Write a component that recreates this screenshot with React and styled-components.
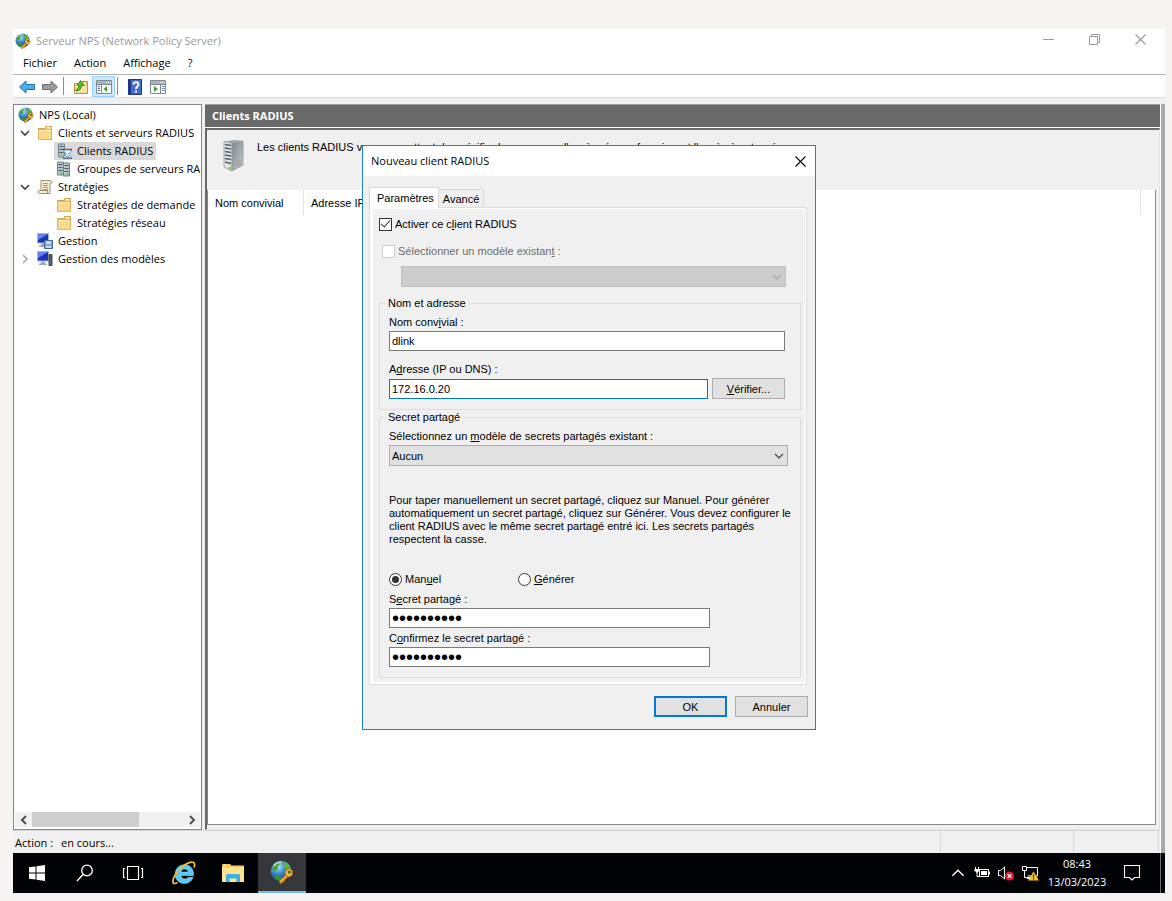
import React from "react";
import styled, { createGlobalStyle, css } from "styled-components";

//* <-- ICONS --> //
const GlobeKeyIcon = ({ size = 16 }) => (
  <svg width={size} height={size} viewBox="0 0 32 32" aria-hidden="true">
    <defs>
      <radialGradient id="globe" cx="0.35" cy="0.28" r="0.75">
        <stop offset="0" stopColor="#b9e4fb" />
        <stop offset="0.45" stopColor="#3a8ad6" />
        <stop offset="1" stopColor="#0b2f80" />
      </radialGradient>
    </defs>
    <circle cx="15" cy="15" r="14" fill="url(#globe)" />
    <path d="M3 12C4 6 8 3 12 3l1 3-3 3 1 3-4 3z" fill="#4ea32c" />
    <path d="M18 2c5 1 8 4 10 9l-3 3-5-2-2-4 2-3z" fill="#5db437" />
    <path d="M7 21l6 0 2 3-2 4C9 27 6 25 5 23z" fill="#2f9a25" />
    <path d="M5 8c3-4 7-5 10-5" stroke="#e4f6ff" strokeWidth="2" fill="none" opacity="0.7" />
    <path d="M22 19L12 28l1 3 3 0 1-2 2 0 1-3 5-4z" fill="#f2a72c" stroke="#9c5a08" strokeWidth="1" />
    <path d="M20 15l5-4 5 3 0 6-5 3-5-3z" fill="#f6b33b" stroke="#9c5a08" strokeWidth="1" />
    <circle cx="26" cy="16" r="2" fill="#2c6b2a" />
  </svg>
);

const FolderIcon = () => (
  <svg width="16" height="16" viewBox="0 0 16 16" aria-hidden="true">
    <path d="M1.500 3.500h7v-2h6v12.500h-13z" fill="#edc56c" stroke="#d3a54a" />
    <path d="M9.500 2h4v1.500h-4z" fill="#fff6d8" />
    <path d="M1.500 4.500h13v10h-13z" fill="#f9da8a" stroke="#dfb45a" />
    <path d="M2 5.500h12" stroke="#fdebb8" />
  </svg>
);

const ServerShape = ({ x }) => (
  <g>
    <path d={`M${x} 1h6v13h-6z`} fill="#b9c3ca" stroke="#75838c" />
    <path d={`M${x + 1} 3.500h4M${x + 1} 6.500h4M${x + 1} 9.500h4`} stroke="#4a5962" />
    <path d={`M${x + 3} 12.500h2`} stroke="#3fd04a" strokeWidth="2" />
  </g>
);

const ServerWaitIcon = () => (
  <svg width="16" height="16" viewBox="0 0 16 16" aria-hidden="true">
    <ServerShape x={2.5} />
    <path d="M7 6.500h9M7 15.500h9" stroke="#8a4a2c" strokeWidth="1.500" />
    <path d="M8 7h7v1.500l-2.500 2.500 2.500 2.500V15H8v-1.500l2.500-2.500L8 8.500z" fill="#f2f9ff" stroke="#5c8fc4" />
    <path d="M9 14.500l2.500-2 2.500 2z" fill="#3d83cf" />
  </svg>
);

const ServerGroupIcon = () => (
  <svg width="16" height="16" viewBox="0 0 16 16" aria-hidden="true">
    <ServerShape x={1.5} />
    <g transform="translate(0 1)">
      <ServerShape x={7.5} />
    </g>
  </svg>
);

const ScrollIcon = () => (
  <svg width="16" height="16" viewBox="0 0 16 16" aria-hidden="true">
    <path d="M4 1.500h9.500c2 0 2 3 0 3H13v10H2.500c-2 0-2-3 0-3H4z" fill="#f5ecd0" stroke="#9a9072" />
    <path d="M6 4.500h5M6 6.500h5M6 8.500h5M6 10.500h5" stroke="#a49b80" />
    <path d="M2.500 11.500h8v2.500" stroke="#9a9072" fill="none" />
  </svg>
);

const MonitorIcon = ({ tower }) => (
  <svg width="16" height="16" viewBox="0 0 16 16" aria-hidden="true">
    <path d="M0.500 0.500h11v9.500h-11z" fill="#1932b8" stroke="#a9b4c6" />
    <path d="M1 1h10L1 7z" fill="#5f83ea" />
    <path d="M4 10.500h4v2h2v1.500H2V12.500h2z" fill="#9aa5b5" />
    {tower ? (
      <path d="M12 3.500h3v11h-3zM12.500 6h2M12.500 8h2" fill="#5d6670" stroke="#3f474f" />
    ) : (
      <>
        <path d="M7.500 7.500h8v8h-8z" fill="#86a6cf" stroke="#43658f" />
        <path d="M9 8h5v3H9zM9 13h5v2H9z" fill="#c4d8f0" />
      </>
    )}
  </svg>
);

const ArrowIcon = ({ forward }) => (
  <svg width="18" height="16" viewBox="0 0 18 16" aria-hidden="true">
    {forward ? (
      <path d="M16.500 8L10 2v3.500H1.500v5H10V14z" fill="#9b9b9b" stroke="#6c6c6c" />
    ) : (
      <path d="M1.500 8L8 2v3.500h8.500v5H8V14z" fill="#45b0ee" stroke="#1f6fb4" />
    )}
  </svg>
);

const FolderUpIcon = () => (
  <svg width="16" height="16" viewBox="0 0 16 16" aria-hidden="true">
    <path d="M1.500 4.500h5l1-2h7v12h-13z" fill="#f3d583" stroke="#b78f3c" />
    <path d="M2 7h12v7H2z" fill="#f9e3a4" />
    <path d="M3 12c3.500 0 5.500-2 5.500-5.500H11L7.500 1.500 4 6.500h2c0 2-1 3.500-3 4z" fill="#52c02c" stroke="#2c8214" strokeWidth="0.800" />
  </svg>
);

const PaneIcon = ({ flip }) => (
  <svg width="16" height="14" viewBox="0 0 16 14" aria-hidden="true">
    <path d="M0.500 0.500h15v13h-15z" fill="#fff" stroke="#7f8a96" />
    <path d="M1 1h14v3H1z" fill="#aab3bd" />
    <path d="M1 4.500h14" stroke="#7f8a96" />
    <path d="M10 2.500h1M12 2.500h1M14 2.500h1" stroke="#fff" />
    {flip ? (
      <>
        <path d="M10.500 5v8" stroke="#7f8a96" />
        <path d="M12 6.500h3M12 8.500h3M12 10.500h3" stroke="#6b91c6" />
        <path d="M4 6v6l4-3z" fill="#35a82b" />
      </>
    ) : (
      <>
        <path d="M5.500 5v8" stroke="#7f8a96" />
        <path d="M2 6.500h2M2 8.500h2M2 10.500h2" stroke="#4a6fae" />
        <path d="M11 6v6L7.500 9z" fill="#35a82b" />
      </>
    )}
  </svg>
);

const HelpIcon = () => (
  <svg width="14" height="16" viewBox="0 0 14 16" aria-hidden="true">
    <path d="M0.500 0.500h13v15h-13z" fill="#4468d6" stroke="#1f3687" />
    <path d="M1 1h2v14H1z" fill="#1f3687" />
    <path d="M5.500 5.500c0-3 5-3 5 0 0 2-2.500 2-2.500 4.500" stroke="#fff" strokeWidth="2" fill="none" />
    <path d="M7 11.500h2v2H7z" fill="#fff" />
  </svg>
);

const BigServerIcon = () => (
  <svg width="22" height="32" viewBox="0 0 22 32" aria-hidden="true">
    <defs>
      <linearGradient id="side" x1="0" y1="0" x2="1" y2="1">
        <stop offset="0" stopColor="#7c878c" />
        <stop offset="1" stopColor="#c5cbce" />
      </linearGradient>
    </defs>
    <path d="M1 1.500L9 3v28l-8-4z" fill="#dfe4e7" stroke="#8e979c" strokeWidth="0.800" />
    <path d="M9 3l11-2v24L9 31z" fill="url(#side)" stroke="#8e979c" strokeWidth="0.800" />
    <path d="M1 1.500L12 0l8 1L9 3z" fill="#9ba5aa" />
    <path d="M2 4.500l6 1M2 8l6 1M2 11.500l6 1M2 15l6 1M2 18.500l6 1M2 22l6 1.500" stroke="#55636c" strokeWidth="1.600" />
    <circle cx="7" cy="28" r="1.500" fill="#7fd41c" />
    <path d="M14 26l4-2M14 23l4-2" stroke="#8d979c" />
  </svg>
);

const Chevron = ({ dir = "down", color = "#404040", width = 10, weight = 1.2 }) => {
  const paths = {
    down: "M1 3l4 4 4-4",
    up: "M1 7l4-4 4 4",
    right: "M3 1l4 4-4 4",
    left: "M7 1L3 5l4 4",
  };
  return (
    <svg width={width} height={width} viewBox="0 0 10 10" aria-hidden="true">
      <path d={paths[dir]} fill="none" stroke={color} strokeWidth={weight} />
    </svg>
  );
};

const CrossIcon = () => (
  <svg width="11" height="11" viewBox="0 0 11 11" aria-hidden="true">
    <path d="M0.500 0.500l10 10M10.500 0.500l-10 10" stroke="currentColor" strokeWidth="1.100" />
  </svg>
);

//* <-- DATA --> //
const menus = ["Fichier", "Action", "Affichage", "?"];

const treeItems = [
  { label: "NPS (Local)", level: 0, icon: <GlobeKeyIcon /> },
  { label: "Clients et serveurs RADIUS", level: 1, open: "down", icon: <FolderIcon /> },
  { label: "Clients RADIUS", level: 2, active: true, icon: <ServerWaitIcon /> },
  { label: "Groupes de serveurs RA", level: 2, icon: <ServerGroupIcon /> },
  { label: "Stratégies", level: 1, open: "down", icon: <ScrollIcon /> },
  { label: "Stratégies de demande", level: 2, icon: <FolderIcon /> },
  { label: "Stratégies réseau", level: 2, icon: <FolderIcon /> },
  { label: "Gestion", level: 1, icon: <MonitorIcon /> },
  { label: "Gestion des modèles", level: 1, open: "right", icon: <MonitorIcon tower /> },
];

const ConsoleTree = () => (
  <TreePane>
    <TreeList>
      {treeItems.map((item) => (
        <TreeRow key={item.label}>
          {item.level > 0 && (
            <Toggle>
              {item.open && (
                <Chevron
                  dir={item.open}
                  color={item.open === "right" ? "#a6a6a6" : "#404040"}
                  weight={1.6}
                />
              )}
            </Toggle>
          )}
          <TreeNode $level={item.level} $active={item.active}>
            {item.icon}
            <span>{item.label}</span>
          </TreeNode>
        </TreeRow>
      ))}
    </TreeList>
    <ScrollBar>
      <ScrollButton aria-label="Défiler à gauche">
        <Chevron dir="left" weight={2} color="#505050" />
      </ScrollButton>
      <ScrollTrack>
        <ScrollThumb />
      </ScrollTrack>
      <ScrollButton aria-label="Défiler à droite">
        <Chevron dir="right" weight={2} color="#505050" />
      </ScrollButton>
    </ScrollBar>
  </TreePane>
);

const ClientsPane = () => (
  <MainPane>
    <PaneTitle>Clients RADIUS</PaneTitle>
    <PaneBody>
      <Description>
        <BigServerIcon />
        <p>
          Les clients RADIUS vous permettent de spécifier les serveurs d'accès réseau
          fournissant l'accès à votre réseau.
        </p>
      </Description>
      <ListBox>
        <ClientsTable>
          <thead>
            <tr>
              <ColumnHead $width="96px">Nom convivial</ColumnHead>
              <ColumnHead>Adresse IP</ColumnHead>
            </tr>
          </thead>
        </ClientsTable>
      </ListBox>
    </PaneBody>
  </MainPane>
);

const NewClientDialog = () => (
  <Dialog role="dialog" aria-labelledby="dialog-title">
    <DialogTitle>
      <h2 id="dialog-title">Nouveau client RADIUS</h2>
      <DialogClose aria-label="Fermer">
        <CrossIcon />
      </DialogClose>
    </DialogTitle>
    <DialogBody>
      <Tabs role="tablist">
        <Tab role="tab" aria-selected="true" $active>
          Paramètres
        </Tab>
        <Tab role="tab" aria-selected="false">
          Avancé
        </Tab>
      </Tabs>
      <TabPanel role="tabpanel">
        <PanelContent>
          <CheckRow>
            <CheckBox type="checkbox" defaultChecked />
            <span>
              Activer ce c<u>l</u>ient RADIUS
            </span>
          </CheckRow>
          <CheckRow $disabled>
            <CheckBox type="checkbox" disabled />
            <span>
              Sélectionner un modèle existan<u>t</u> :
            </span>
          </CheckRow>
          <TemplateRow>
            <Select disabled aria-label="Modèle existant" />
            <Chevron color="#a6a6a6" />
          </TemplateRow>

          <Group>
            <legend>Nom et adresse</legend>
            <GroupBody>
              <Label htmlFor="name">
                Nom conv<u>i</u>vial :
              </Label>
              <FieldRow>
                <TextInput id="name" defaultValue="dlink" />
              </FieldRow>
              <Label htmlFor="address" $top="11px">
                A<u>d</u>resse (IP ou DNS) :
              </Label>
              <FieldRow>
                <TextInput id="address" defaultValue="172.16.0.20" $focused />
                <Button>
                  <u>V</u>érifier...
                </Button>
              </FieldRow>
            </GroupBody>
          </Group>

          <Group>
            <legend>Secret partagé</legend>
            <GroupBody>
              <Label htmlFor="template">
                Sélectionnez un <u>m</u>odèle de secrets partagés existant :
              </Label>
              <SelectRow>
                <Select id="template">
                  <option>Aucun</option>
                </Select>
                <Chevron />
              </SelectRow>
              <Help>
                Pour taper manuellement un secret partagé, cliquez sur Manuel. Pour générer
                <br />
                automatiquement un secret partagé, cliquez sur Générer. Vous devez configurer le
                <br />
                client RADIUS avec le même secret partagé entré ici. Les secrets partagés
                <br />
                respectent la casse.
              </Help>
              <RadioRow>
                <label>
                  <Radio type="radio" name="mode" defaultChecked />
                  <span>
                    Man<u>u</u>el
                  </span>
                </label>
                <label>
                  <Radio type="radio" name="mode" />
                  <span>
                    <u>G</u>énérer
                  </span>
                </label>
              </RadioRow>
              <Label htmlFor="secret" $top="6px">
                S<u>e</u>cret partagé :
              </Label>
              <PasswordInput id="secret" type="password" defaultValue="azertyuiop" />
              <Label htmlFor="confirm" $top="3px">
                C<u>o</u>nfirmez le secret partagé :
              </Label>
              <PasswordInput id="confirm" type="password" defaultValue="azertyuiop" />
            </GroupBody>
          </Group>
        </PanelContent>
      </TabPanel>
      <DialogActions>
        <Button $primary>OK</Button>
        <Button>Annuler</Button>
      </DialogActions>
    </DialogBody>
  </Dialog>
);

const TaskBar = () => (
  <Bar>
    <BarGroup>
      <TaskButton aria-label="Démarrer">
        <svg width="16" height="16" viewBox="0 0 16 16">
          <path d="M0 2.300L6.500 1.400v6.100H0zM7.500 1.200L16 0v7.500H7.500zM0 8.500h6.500v6.100L0 13.700zM7.500 8.500H16V16l-8.500-1.200z" fill="#fff" />
        </svg>
      </TaskButton>
      <TaskButton aria-label="Rechercher">
        <svg width="18" height="18" viewBox="0 0 18 18">
          <circle cx="11" cy="6.500" r="5.300" fill="none" stroke="#fff" strokeWidth="1.300" />
          <path d="M7 10.500L1 17" stroke="#fff" strokeWidth="1.400" />
        </svg>
      </TaskButton>
      <TaskButton aria-label="Applications actives">
        <svg width="22" height="14" viewBox="0 0 22 14">
          <path d="M5.500 0.500h11v13h-11zM3 2.500H1.500v9H3M19 2.500h1.500v9H19" fill="none" stroke="#fff" strokeWidth="1.200" />
        </svg>
      </TaskButton>
    </BarGroup>
    <BarGroup $gap="1px">
      <TaskButton aria-label="Internet Explorer">
        <svg width="24" height="24" viewBox="0 0 24 24">
          <path
            d="M21.500 14.500H9c.3 4 5.500 4.500 7.200 1.800h4.900c-1.600 4.200-5 6.200-8.600 6.200-5.500 0-9.300-3.700-9.300-9.200S7 3.800 12.500 3.800c6 0 9.300 4.200 9 10.700zM9 11h7.200c-.4-4-6.800-4-7.200 0z"
            fill="#5cc8f6"
            stroke="#bfeaff"
            strokeWidth="0.500"
          />
          <path
            d="M5.500 21.500C-.5 25 0 19 3.500 13.500 8.500 5.500 17.500-.5 21.500 1.500c1.300.8 1.300 3 .4 5"
            fill="none"
            stroke="#f3bd2e"
            strokeWidth="1.800"
          />
        </svg>
      </TaskButton>
      <TaskButton aria-label="Explorateur de fichiers">
        <svg width="22" height="18" viewBox="0 0 22 18">
          <path d="M0 1.500C0 .5.500 0 1.500 0H8l1.500 1.500H22v3H0z" fill="#f6c95a" />
          <path d="M0 3h22v15H0z" fill="#ffe38f" />
          <path d="M1.500 1.200h2" stroke="#fff" />
          <path d="M4 18v-6.500c0-1 .5-1.500 1.500-1.500h11c1 0 1.500.5 1.500 1.500V18h-3.500v-3.500h-7V18z" fill="#38b3e8" />
        </svg>
      </TaskButton>
      <TaskButton aria-label="Serveur NPS" $active>
        <GlobeKeyIcon size={24} />
      </TaskButton>
    </BarGroup>
    <Tray>
      <TrayButton aria-label="Icônes cachées">
        <Chevron dir="up" color="#fff" width={14} weight={1} />
      </TrayButton>
      <TrayButton aria-label="Batterie">
        <svg width="16" height="12" viewBox="0 0 16 12">
          <path d="M5.500 2.500h9v7h-9zM15.500 4.500v3" fill="none" stroke="#fff" />
          <path d="M7 4h6v4H7z" fill="#fff" />
          <path d="M1.500 0v2M4.500 0v2M3 5v4.500h2.500" fill="none" stroke="#fff" />
          <path d="M0.500 2h5v2.500h-1.500v1h-2v-1H0.500z" fill="#fff" />
        </svg>
      </TrayButton>
      <TrayButton aria-label="Haut-parleurs">
        <svg width="16" height="16" viewBox="0 0 16 16">
          <path d="M0.500 5.500h2L6.500 2v12l-4-3.500h-2z" fill="none" stroke="#fff" />
          <circle cx="11.500" cy="11" r="4.500" fill="#e01b2c" />
          <path d="M9.700 9.200l3.600 3.600M13.300 9.200l-3.600 3.600" stroke="#fff" strokeWidth="1.200" />
        </svg>
      </TrayButton>
      <TrayButton aria-label="Réseau">
        <svg width="17" height="16" viewBox="0 0 17 16">
          <path d="M5 2.500h10.500v8.500H5.500M0.500 1.500h4v4h-4zM2.500 6v6.500h6M5 13.500h5" fill="none" stroke="#fff" />
          <path d="M11.500 6.500L17 15.500H6z" fill="#fcc419" />
          <path d="M11.500 9.500v3M11.500 13.300v1.200" stroke="#222" strokeWidth="1.200" />
        </svg>
      </TrayButton>
      <Clock>
        <span>08:43</span>
        <span>13/03/2023</span>
      </Clock>
      <TrayButton aria-label="Notifications" $wide>
        <svg width="16" height="16" viewBox="0 0 16 16">
          <path d="M0.500 0.500h15v12h-5L8 15l-2.500-2.500h-5z" fill="none" stroke="#fff" strokeWidth="1.100" />
        </svg>
      </TrayButton>
      <ShowDesktop />
    </Tray>
  </Bar>
);

export default function App() {
  return (
    <>
      <GlobalStyle />
      <Desktop>
        <Screen>
          <TitleBar>
            <GlobeKeyIcon />
            <h1>Serveur NPS (Network Policy Server)</h1>
            <WindowButton aria-label="Réduire">
              <svg width="11" height="11" viewBox="0 0 11 11">
                <path d="M0 5.500h11" stroke="currentColor" />
              </svg>
            </WindowButton>
            <WindowButton aria-label="Restaurer">
              <svg width="11" height="11" viewBox="0 0 11 11">
                <path d="M0.500 2.500h8v8h-8zM2.500 2v-1.500h8v8h-1.500" fill="none" stroke="currentColor" />
              </svg>
            </WindowButton>
            <WindowButton aria-label="Fermer la console">
              <CrossIcon />
            </WindowButton>
          </TitleBar>
          <MenuBar>
            {menus.map((menu) => (
              <button key={menu}>{menu}</button>
            ))}
          </MenuBar>
          <ToolBar>
            <ToolButton aria-label="Précédent">
              <ArrowIcon />
            </ToolButton>
            <ToolButton aria-label="Suivant">
              <ArrowIcon forward />
            </ToolButton>
            <Separator />
            <ToolButton aria-label="Monter d'un niveau">
              <FolderUpIcon />
            </ToolButton>
            <ToolButton aria-label="Arborescence" $active>
              <PaneIcon />
            </ToolButton>
            <Separator />
            <ToolButton aria-label="Aide">
              <HelpIcon />
            </ToolButton>
            <ToolButton aria-label="Volet Actions">
              <PaneIcon flip />
            </ToolButton>
          </ToolBar>
          <WorkArea>
            <Console>
              <Panes>
                <ConsoleTree />
                <ClientsPane />
              </Panes>
              <StatusBar>
                <StatusText>
                  <span>Action :</span>
                  <span>en cours...</span>
                </StatusText>
                <StatusCell $width="133px" />
                <StatusCell $width="85px" />
                <StatusCell $width="2px" />
              </StatusBar>
            </Console>
            <EdgeStrip />
          </WorkArea>
          <TaskBar />
          <NewClientDialog />
        </Screen>
      </Desktop>
    </>
  );
}

//? <-- STYLES --> //
const uiFont = `"Open Sans", "Noto Sans", sans-serif`;
const dialogFont = `"Liberation Sans", Arial, sans-serif`;

const GlobalStyle = createGlobalStyle`
  *,
  *::before,
  *::after {
    box-sizing: border-box;
  }

  body {
    margin: 0;
    background: #f5f4f2;
    font: 11px/16px ${uiFont};
    color: #000;
  }

  h1,
  h2,
  p,
  ul {
    margin: 0;
    padding: 0;
    font-size: inherit;
    font-weight: 400;
  }

  button,
  input,
  select {
    margin: 0;
    padding: 0;
    border: 0;
    border-radius: 0;
    background: none;
    color: inherit;
    font: inherit;
    outline: 0;
  }

  svg {
    display: block;
    flex: none;
  }
`;

const center = css`
  display: flex;
  align-items: center;
  justify-content: center;
`;

const Desktop = styled.div`
  display: flex;
  min-height: 100vh;
  padding: 29px 7px 8px 13px;
`;

const Screen = styled.div`
  position: relative;
  display: flex;
  flex: 1;
  flex-direction: column;
  min-width: 0;
  background: #f0f0f0;
`;

const TitleBar = styled.header`
  display: flex;
  align-items: center;
  height: 24px;
  padding: 0 2px;
  background: #fff;
  color: #999;

  h1 {
    flex: 1;
    padding-left: 5px;
  }
`;

const WindowButton = styled.button`
  ${center}
  align-self: flex-start;
  width: 46px;
  height: 21px;
`;

const MenuBar = styled.nav`
  display: flex;
  align-items: center;
  gap: 17px;
  height: 21px;
  padding: 0 10px 2px;
  background: #fff;
`;

const ToolBar = styled.div`
  display: flex;
  align-items: flex-end;
  height: 24px;
  padding-left: 2px;
  border-top: 1px solid #b0b0b0;
  border-bottom: 1px solid #dadada;
  background: #fff;
`;

const ToolButton = styled.button`
  ${center}
  width: 23px;
  height: 21px;
  border: 1px solid ${({ $active }) => ($active ? "#99d1ff" : "transparent")};
  background: ${({ $active }) => ($active ? "#cce8ff" : "transparent")};
`;

const Separator = styled.span`
  align-self: center;
  width: 1px;
  height: 18px;
  margin: 0 5px 0 2px;
  background: #8c8c8c;
`;

const WorkArea = styled.main`
  display: flex;
  flex: 1;
  padding-top: 6px;
`;

const Console = styled.div`
  display: flex;
  flex: 1;
  flex-direction: column;
  min-width: 0;
`;

const EdgeStrip = styled.div`
  width: 5px;
  border-left: 1px solid #fff;
  background: #a9a9a9;
`;

const Panes = styled.div`
  display: flex;
  flex: 1;
  gap: 3px;
`;

//* <-- CONSOLE TREE --> //
const TreePane = styled.aside`
  display: flex;
  flex-direction: column;
  width: 189px;
  padding: 1px 1px 2px;
  border: 1px solid #828790;
  background: #fff;
`;

const TreeList = styled.ul`
  flex: 1;
  overflow: hidden;
  list-style: none;
`;

const TreeRow = styled.li`
  display: flex;
  align-items: center;
  height: 18px;
  padding-left: 2px;
`;

const Toggle = styled.span`
  ${center}
  flex: none;
  width: 16px;
`;

const TreeNode = styled.span`
  display: flex;
  align-items: center;
  gap: 5px;
  height: 18px;
  margin-left: ${({ $level }) => ($level > 1 ? 21 : $level * 3) + "px"};
  padding: 0 3px 0 ${({ $level }) => ($level > 1 ? "2px" : "1px")};
  background: ${({ $active }) => ($active ? "#d9d9d9" : "transparent")};
  white-space: nowrap;
`;

const ScrollBar = styled.div`
  display: flex;
  height: 15px;
  background: #f0f0f0;
`;

const ScrollButton = styled.button`
  ${center}
  width: 17px;
`;

const ScrollTrack = styled.div`
  flex: 1;
`;

const ScrollThumb = styled.div`
  width: 71%;
  height: 100%;
  background: #cdcdcd;
`;

//* <-- CLIENTS PANE --> //
const MainPane = styled.section`
  display: flex;
  flex: 1;
  flex-direction: column;
  min-width: 0;
`;

const PaneTitle = styled.h2`
  height: 24px;
  padding: 0 7px;
  border-top: 1px solid #a0a0a0;
  border-bottom: 1px solid #fff;
  background: #696969;
  color: #fff;
  font-weight: 700;
  line-height: 22px;
`;

const PaneBody = styled.div`
  display: flex;
  flex: 1;
  flex-direction: column;
  padding: 0 3px 4px 0;
  border: 2px solid #696969;
  border-right: 1px solid #e3e3e3;
  border-bottom: 1px solid #e3e3e3;
  background: #f0f0f0;
`;

const Description = styled.div`
  display: flex;
  gap: 12px;
  height: 60px;
  padding: 10px 16px;
  font-family: ${dialogFont};

  p {
    line-height: 14px;
  }
`;

const ListBox = styled.div`
  flex: 1;
  border: 1px solid #828790;
  border-top: 0;
  background: #fff;
`;

const ClientsTable = styled.table`
  width: calc(100% - 14px);
  border-collapse: separate;
  border-spacing: 0;
  table-layout: fixed;
  font-family: ${dialogFont};
`;

const ColumnHead = styled.th`
  width: ${({ $width }) => $width || "auto"};
  height: 25px;
  padding: 0 6px 0 7px;
  border-right: 1px solid #e5e5e5;
  font-weight: 400;
  text-align: left;
`;

const StatusBar = styled.footer`
  display: flex;
  height: 23px;
  padding-bottom: 1px;
  border-top: 1px solid #d7d7d7;
`;

const StatusText = styled.div`
  display: flex;
  flex: 1;
  align-items: center;
  gap: 8px;
  padding: 2px 0 0 2px;
`;

const StatusCell = styled.div`
  width: ${({ $width }) => $width};
  border-left: 1px solid #d7d7d7;
`;

//* <-- DIALOG --> //
const Dialog = styled.section`
  position: absolute;
  top: 116px;
  left: calc(50% - 227px);
  width: 454px;
  border: 1px solid #1883d7;
  background: #f0f0f0;
  font-family: ${dialogFont};
  line-height: 14px;

  u {
    text-underline-offset: 1px;
  }
`;

const DialogTitle = styled.div`
  display: flex;
  align-items: center;
  height: 30px;
  padding-left: 8px;
  background: #fff;
  font-family: ${uiFont};

  h2 {
    flex: 1;
  }
`;

const DialogClose = styled.button`
  ${center}
  width: 30px;
  height: 28px;
`;

const DialogBody = styled.div`
  padding: 11px 7px 12px 6px;
`;

const Tabs = styled.div`
  display: flex;
  align-items: flex-end;
  height: 20px;
`;

const Tab = styled.button`
  height: 18px;
  padding: 0 4px;
  border: 1px solid #d9d9d9;
  border-bottom: 0;
  border-left: 0;

  ${({ $active }) =>
    $active &&
    css`
      z-index: 1;
      height: 21px;
      margin-bottom: -1px;
      padding: 0 4px 0 7px;
      border-left: 1px solid #d9d9d9;
      background: #fff;
    `}
`;

const TabPanel = styled.div`
  margin-right: 1px;
  padding: 1px 1px 2px 3px;
  border: 1px solid #dcdcdc;
  background: #fff;
`;

const PanelContent = styled.div`
  padding: 7px 4px 4px 6px;
  background: #f0f0f0;
`;

const CheckRow = styled.label`
  display: flex;
  align-items: center;
  gap: 3px;
  height: 16px;
  margin-bottom: 11px;

  ${({ $disabled }) =>
    $disabled &&
    css`
      margin-bottom: 7px;
      padding-left: 3px;
      color: #6d6d6d;
    `}
`;

const CheckBox = styled.input`
  ${center}
  appearance: none;
  width: 13px;
  height: 13px;
  border: 1px solid #333;
  background: #fff;

  &:disabled {
    border-color: #ccc;
  }

  &:checked::after {
    content: "";
    width: 5px;
    height: 9px;
    margin-bottom: 3px;
    border: solid #333;
    border-width: 0 1px 1px 0;
    transform: rotate(42deg);
  }
`;

const Radio = styled.input`
  ${center}
  appearance: none;
  width: 13px;
  height: 13px;
  border: 1px solid #333;
  border-radius: 50%;
  background: #fff;

  &:checked::after {
    content: "";
    width: 7px;
    height: 7px;
    border-radius: 50%;
    background: #333;
  }
`;

const SelectRow = styled.div`
  display: grid;
  align-items: center;

  > * {
    grid-area: 1 / 1;
  }

  > svg {
    justify-self: end;
    margin-right: 4px;
    pointer-events: none;
  }
`;

const TemplateRow = styled(SelectRow)`
  margin: 0 15px 9px 22px;
`;

const Select = styled.select`
  appearance: none;
  width: 100%;
  height: 21px;
  padding: 0 2px;
  border: 1px solid #adadad;
  background: #e1e1e1;

  &:disabled {
    border-color: #bfbfbf;
    background: #ccc;
    opacity: 1;
  }
`;

const Group = styled.fieldset`
  min-width: 0;
  margin: 0;
  padding: 0 12px 10px 5px;
  border: 1px solid #dcdcdc;

  legend {
    padding: 0 3px;
  }
`;

const GroupBody = styled.div`
  padding: 5px 0 0 4px;
`;

const Label = styled.label`
  display: block;
  width: fit-content;
  margin: ${({ $top }) => $top || 0} 0 2px;
`;

const FieldRow = styled.div`
  display: flex;
  align-items: center;
  gap: 4px;
  margin-right: 3px;
`;

const TextInput = styled.input`
  flex: 1;
  min-width: 0;
  height: 20px;
  padding: 0 2px;
  border: 1px solid ${({ $focused }) => ($focused ? "#0078d7" : "#7a7a7a")};
  background: #fff;
`;

const PasswordInput = styled(TextInput)`
  display: block;
  width: 321px;
  font-size: 20px;
  line-height: 18px;
`;

const Button = styled.button`
  width: 73px;
  height: 21px;
  border: ${({ $primary }) => ($primary ? "2px solid #0078d7" : "1px solid #adadad")};
  background: #e1e1e1;
`;

const Help = styled.p`
  margin: 28px 0 26px;
  line-height: 13px;
  white-space: nowrap;
`;

const RadioRow = styled.div`
  display: flex;

  label {
    display: flex;
    align-items: center;
    gap: 3px;
    width: 129px;
  }
`;

const DialogActions = styled.div`
  display: flex;
  justify-content: flex-end;
  gap: 8px;
  margin-top: 11px;
`;

//* <-- TASKBAR --> //
const Bar = styled.footer`
  display: flex;
  gap: 3px;
  height: 40px;
  background: #020307;
  color: #fff;
`;

const BarGroup = styled.div`
  display: flex;
  gap: ${({ $gap }) => $gap || 0};
`;

const TaskButton = styled.button`
  ${center}
  width: 48px;

  ${({ $active }) =>
    $active &&
    css`
      border-bottom: 2px solid #76b9ed;
      background: #35373b;
    `}
`;

const Tray = styled.div`
  display: flex;
  margin-left: auto;
`;

const TrayButton = styled.button`
  ${center}
  width: ${({ $wide }) => ($wide ? "48px" : "24px")};
`;

const Clock = styled.time`
  display: flex;
  flex-direction: column;
  align-items: center;
  justify-content: center;
  width: 66px;
  padding-left: 4px;
  line-height: 18px;
`;

const ShowDesktop = styled.div`
  width: 5px;
  margin-left: 4px;
  border-left: 1px solid #6e6e6e;
`;
